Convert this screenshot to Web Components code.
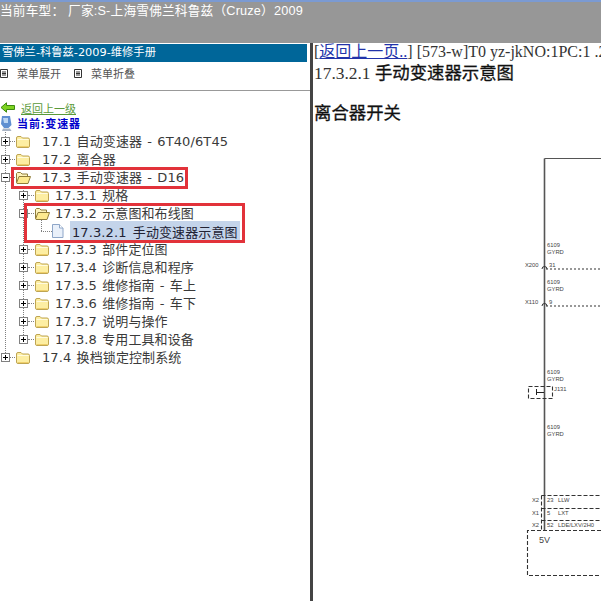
<!DOCTYPE html>
<html>
<head>
<meta charset="utf-8">
<style>
html,body{margin:0;padding:0;height:100%;overflow:hidden;background:#fff;}
</style>
</head>
<body>
<manual-app></manual-app>

<script>
//icons used in the tree
const folderClosed = `<svg width="16" height="15" viewBox="0 0 16 15"><path d="M1.500 4 Q1.500 2.500 3 2.500 H6 L7.500 4 H13 Q14.500 4 14.500 5.500 V12 Q14.500 13.500 13 13.500 H3 Q1.500 13.500 1.500 12 Z" fill="#fdeea2" stroke="#bfa552"/><path d="M2.500 5.500 H13.500" stroke="#fffbe0"/><path d="M3 12.500 H13.500" stroke="#efcf6a"/></svg>`;
const folderOpen = `<svg width="16" height="15" viewBox="0 0 16 15"><path d="M1.500 12.500 V3.500 L2.500 2.500 H5.500 L7 4 H12.500 V6.500" fill="#fdf3bc" stroke="#8f7c3a"/><path d="M1.500 13 L4 6.500 H15.500 L13 13.500 H2 Z" fill="#fde98e" stroke="#8f7c3a"/></svg>`;
const fileIcon = `<svg width="12" height="14" viewBox="0 0 12 14"><path d="M.5 .5 H7.500 L11 4 V13.500 H.5 Z" fill="#e9f0fa" stroke="#8ea6c8"/><path d="M7.500 .5 V4 H11" fill="#fff" stroke="#8ea6c8"/></svg>`;
const plusBox = `<svg width="9" height="9" viewBox="0 0 9 9"><rect x=".5" y=".5" width="8" height="8" fill="#fff" stroke="#808080"/><path d="M2 4.500 H7 M4.500 2 V7" stroke="#000"/></svg>`;
const minusBox = `<svg width="9" height="9" viewBox="0 0 9 9"><rect x=".5" y=".5" width="8" height="8" fill="#fff" stroke="#808080"/><path d="M2 4.500 H7" stroke="#000"/></svg>`;

//one row of the tree
const rowTemplate = document.createElement("template");
rowTemplate.innerHTML = `
<style>
:host{
    display:flex;
    align-items:center;
    position:relative;
    z-index:1;
    height:18px;
    white-space:nowrap;
    font:13px "DejaVu Sans","Noto Sans CJK SC",sans-serif;
    letter-spacing:.1px;
    word-spacing:1px;
    color:#3a3a3a;
}
.box{width:9px;height:9px;flex:none;line-height:0;}
.dots{width:6px;height:0;border-top:1px dotted #808080;flex:none;}
.icon{flex:none;line-height:0;width:16px;}
.label{margin-left:9px;padding:1px 2px;position:relative;top:-1px;}
:host([level="0"]){padding-left:1px;}
:host([level="0"]) .dots{width:5px;}
:host([level="1"]){padding-left:19px;}
:host([level="1"]) .label{margin-left:3px;}
:host([level="2"]){padding-left:41px;word-spacing:2px;}
:host([level="2"]) .box{display:none;}
:host([level="2"]) .dots{width:11px;}
:host([level="2"]) .icon{width:14px;}
:host([level="2"]) .label{
    margin-left:4px;
    background:#c4d4ea;
    color:#223;
    top:0;
}
</style>
<span class="box"></span><span class="dots"></span><span class="icon"></span><span class="label"><slot></slot></span>
`;
class TreeRow extends HTMLElement{
    constructor(){
        super();
        this.attachShadow({mode:"open"});
        this.shadowRoot.appendChild(rowTemplate.content.cloneNode(true));
    }
    connectedCallback(){
        const kind = this.getAttribute("kind");
        this.shadowRoot.querySelector(".box").innerHTML = kind == "open" ? minusBox : plusBox;
        let icon = folderClosed;
        if(kind == "open") icon = folderOpen;
        if(kind == "file") icon = fileIcon;
        this.shadowRoot.querySelector(".icon").innerHTML = icon;
    }
}
customElements.define("tree-row",TreeRow);

//the left pane
const menuTemplate = document.createElement("template");
menuTemplate.innerHTML = `
<style>
:host{
    display:block;
    width:310px;
    flex:none;
    background:#fff;
    position:relative;
    font:12px "Noto Sans CJK SC",sans-serif;
    overflow:hidden;
}
.title{
    margin:1px 3px 0 0;
    height:18px;
    background:#006699;
    color:#fff;
    padding-left:2px;
    font:11.300px/18px "DejaVu Sans","Noto Sans CJK SC",sans-serif;
}
.tools{
    display:flex;
    align-items:center;
    height:22px;
    padding-bottom:6px;
    border-bottom:1px solid #999;
    font-size:11px;
    color:#555;
}
.tools span{display:flex;align-items:center;gap:9px;margin-right:13px;}
.tools svg{flex:none;}
.nav{height:32px;margin-top:9px;}
.line{display:flex;align-items:center;height:15px;font-size:11px;white-space:nowrap;}
.back{color:#5a9a3a;text-decoration:underline;gap:6px;}
.cur{color:#0000cc;font-weight:700;gap:4px;letter-spacing:.9px;}
.tree{position:relative;}
.rail{position:absolute;border-left:1px dotted #808080;}
.mark{position:absolute;z-index:2;border:3px solid #e2323a;box-sizing:border-box;}
</style>
<div class="title">雪佛兰-科鲁兹-2009-维修手册</div>
<div class="tools">
  <span><svg width="8" height="9" viewBox="0 0 8 9"><path d="M.5 .5 H7.500 V8.500 H.5 Z M2 3 H6 M2 4.500 H6 M2 6 H6" fill="none" stroke="#333"/></svg>菜单展开</span>
  <span><svg width="8" height="9" viewBox="0 0 8 9"><path d="M.5 .5 H7.500 V8.500 H.5 Z M2 3 H6 M2 4.500 H6 M2 6 H6" fill="none" stroke="#333"/></svg>菜单折叠</span>
</div>
<div class="nav">
  <div class="line back"><svg width="15" height="11" viewBox="0 0 15 11"><path d="M1 5.500 L6.500 .8 V3.500 H14.500 V7.500 H6.500 V10.200 Z" fill="#7ed321" stroke="#3c8a10"/></svg>返回上一级</div>
  <div class="line cur"><svg width="13" height="17" viewBox="0 0 13 17" style="margin-top:2px"><path d="M2 1 H10 L11.500 10 L8.500 13 H4 L1 9 Z" fill="#5f8fd0"/><path d="M3 3 H8 L8 8 H4 Z" fill="#bcd6f2"/><path d="M3 13.500 H10 L11.500 16 H2 Z" fill="#a9b4c4"/></svg>当前:变速器</div>
</div>
<div class="tree">
  <div class="rail" style="left:5px;top:0;height:225px"></div>
  <div class="rail" style="left:23px;top:54px;height:153px"></div>
  <div class="rail" style="left:41px;top:88px;height:11px"></div>
  <slot></slot>
  <div class="mark" style="left:11px;top:35px;width:177px;height:22px"></div>
  <div class="mark" style="left:24px;top:71px;width:221px;height:40px"></div>
</div>
`;
class TreeMenu extends HTMLElement{
    constructor(){
        super();
        this.attachShadow({mode:"open"});
        this.shadowRoot.appendChild(menuTemplate.content.cloneNode(true));
    }
}
customElements.define("tree-menu",TreeMenu);

//the wiring diagram on the right, its a free drawing so svg coords are the content
const diagramTemplate = document.createElement("template");
diagramTemplate.innerHTML = `
<style>
:host{display:block;line-height:0;}
text{font:5.800px "Liberation Sans",sans-serif;fill:#444;}
</style>
<svg width="288" height="457" viewBox="0 0 288 457">
  <path d="M231.500 386 V14.500" fill="none" stroke="#555" stroke-width="1.600"/>
  <path d="M231.500 14.500 H288" fill="none" stroke="#555" stroke-width="1"/>
  <g fill="none" stroke="#333" stroke-dasharray="4 2" stroke-width="1.100">
    <path d="M233 125 H288 M233 162 H288" stroke-dasharray="2 2"/>
    <rect x="215.500" y="242.500" width="24" height="12"/>
    <path d="M228.500 351.500 H288 M228.500 364.500 H288 M228.500 376.500 H288 M228.500 351.500 V386"/>
    <path d="M288 386.500 H214.500 V431.500 H288"/>
  </g>
  <path d="M223.500 245 V251 M223.500 248.500 H231" stroke="#222" fill="none"/>
  <path d="M229 125 A2.500 2.500 0 0 1 234 125 M229 162 A2.500 2.500 0 0 1 234 162" stroke="#333" fill="none"/>
  <text x="234" y="103">6109</text><text x="234" y="110">GYRD</text>
  <text x="212" y="123">X200</text><text x="236" y="123">31</text>
  <text x="234" y="140">6109</text><text x="234" y="147">GYRD</text>
  <text x="212" y="160">X110</text><text x="236" y="160">9</text>
  <text x="234" y="230">6109</text><text x="234" y="237">GYRD</text>
  <text x="241" y="247">J131</text>
  <text x="234" y="285">6109</text><text x="234" y="292">GYRD</text>
  <text x="219" y="358">X2</text><text x="234" y="358">23</text><text x="245" y="358">LLW</text>
  <text x="219" y="371">X1</text><text x="234" y="371">5</text><text x="245" y="371">LXT</text>
  <text x="219" y="383">X2</text><text x="234" y="383">52</text><text x="245" y="383">LDE/LXV/2H0</text>
  <text x="226" y="399" style="font-size:9px">5V</text>
</svg>
`;
class WiringDiagram extends HTMLElement{
    constructor(){
        super();
        this.attachShadow({mode:"open"});
        this.shadowRoot.appendChild(diagramTemplate.content.cloneNode(true));
    }
}
customElements.define("wiring-diagram",WiringDiagram);

//the right pane
const docTemplate = document.createElement("template");
docTemplate.innerHTML = `
<style>
:host{
    display:block;
    flex:1;
    min-width:0;
    background:#fff;
    border-left:3px solid #444;
    overflow:hidden;
    position:relative;
    font:16px "Liberation Serif","Noto Sans CJK SC",serif;
    color:#333;
    white-space:nowrap;
}
.top{height:17px;line-height:17px;padding-left:1px;}
a{color:#2233aa;text-decoration:underline;}
h3{font:inherit;font-size:17.400px;line-height:22px;margin:2px 0 0;padding-left:1px;}
h3 span{color:#111;-webkit-text-stroke:.3px #111;}
h3.second{margin-top:18px;}
wiring-diagram{position:absolute;left:0;top:101px;}
</style>
<div class="top">[<a>返回上一页..</a>] [573-w]T0 yz-jkNO:1PC:1 .2</div>
<h3>17.3.2.1 <span>手动变速器示意图</span></h3>
<h3 class="second"><span>离合器开关</span></h3>
<wiring-diagram></wiring-diagram>
`;
class DocPane extends HTMLElement{
    constructor(){
        super();
        this.attachShadow({mode:"open"});
        this.shadowRoot.appendChild(docTemplate.content.cloneNode(true));
    }
}
customElements.define("doc-pane",DocPane);

//the whole page
const appTemplate = document.createElement("template");
appTemplate.innerHTML = `
<style>
:host{
    display:flex;
    flex-direction:column;
    height:601px;
    width:601px;
    overflow:hidden;
}
header{
    height:41px;
    flex:none;
    background:#979797;
    border-top:2px solid #7b9ad2;
    color:#fff;
    font:12.700px/19px "Liberation Sans","Noto Sans CJK SC",sans-serif;
    letter-spacing:.18px;
    white-space:nowrap;
    overflow:hidden;
}
main{flex:1;display:flex;min-height:0;}
</style>
<header>当前车型： 厂家:S-上海雪佛兰科鲁兹（Cruze）2009</header>
<main><tree-menu><slot></slot></tree-menu><doc-pane></doc-pane></main>
`;
class ManualApp extends HTMLElement{
    constructor(){
        super();
        this.attachShadow({mode:"open"});
        this.shadowRoot.appendChild(appTemplate.content.cloneNode(true));
        const rows = [
            [0,"closed","17.1 自动变速器 - 6T40/6T45"],
            [0,"closed","17.2 离合器"],
            [0,"open","17.3 手动变速器 - D16"],
            [1,"closed","17.3.1 规格"],
            [1,"open","17.3.2 示意图和布线图"],
            [2,"file","17.3.2.1 手动变速器示意图"],
            [1,"closed","17.3.3 部件定位图"],
            [1,"closed","17.3.4 诊断信息和程序"],
            [1,"closed","17.3.5 维修指南 - 车上"],
            [1,"closed","17.3.6 维修指南 - 车下"],
            [1,"closed","17.3.7 说明与操作"],
            [1,"closed","17.3.8 专用工具和设备"],
            [0,"closed","17.4 换档锁定控制系统"]
        ];
        for(const r of rows){
            const row = document.createElement("tree-row");
            row.setAttribute("level",r[0]);
            row.setAttribute("kind",r[1]);
            row.textContent = r[2];
            this.appendChild(row);
        }
    }
}
customElements.define("manual-app",ManualApp);
</script>
</body>
</html>
